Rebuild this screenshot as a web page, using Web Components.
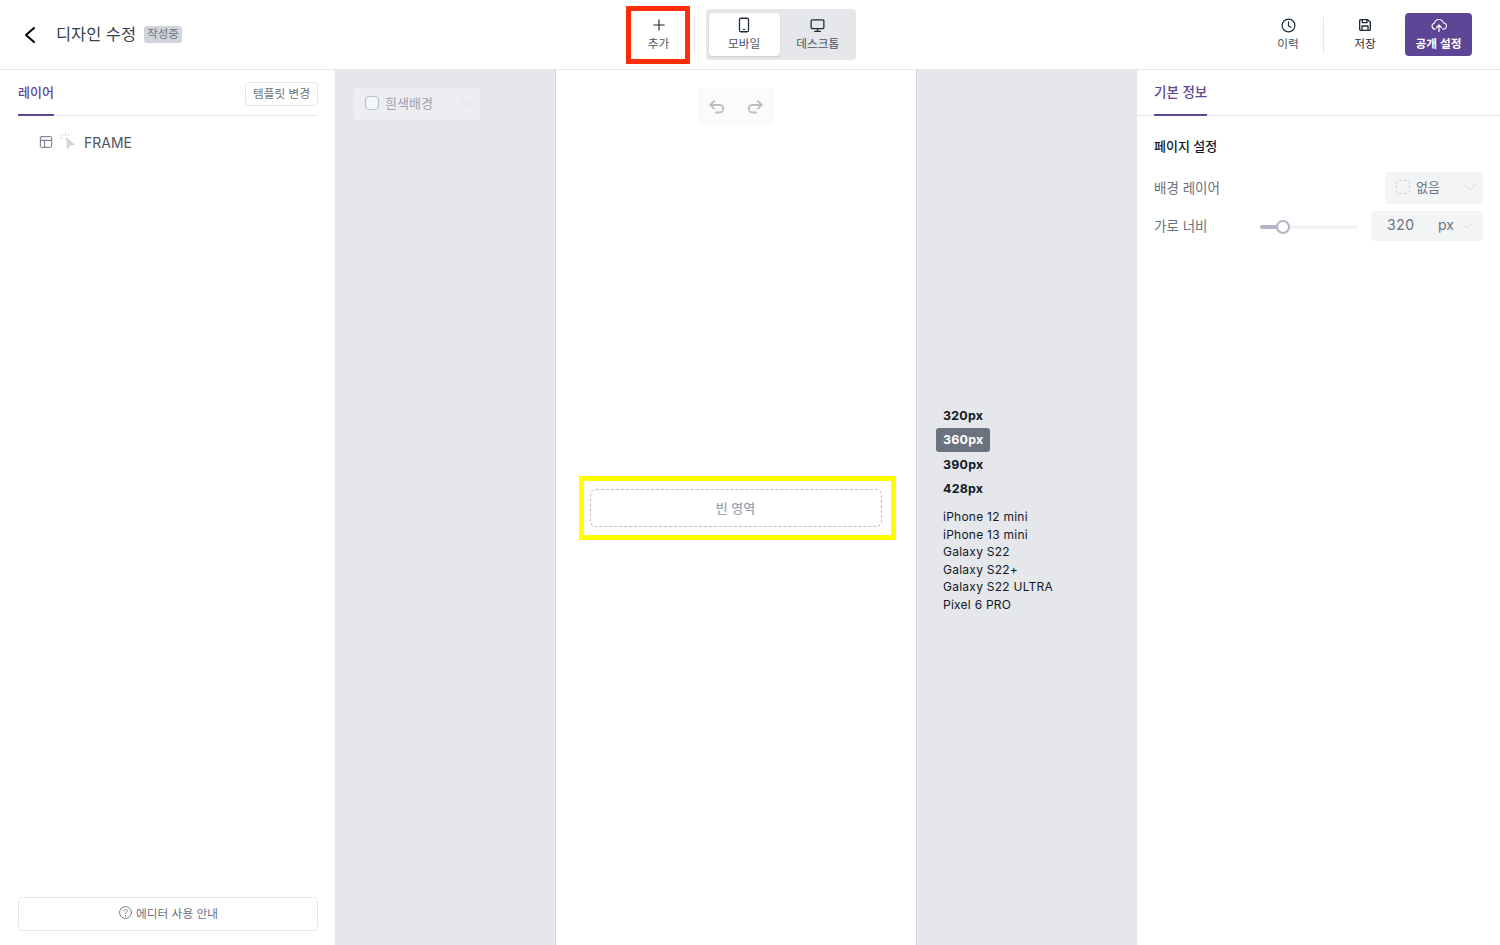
<!DOCTYPE html>
<html lang="ko">
<head>
<meta charset="utf-8">
<title>디자인 수정</title>
<style>
    html, body { margin: 0; height: 100%; }
    body {
        width: 1500px;
        height: 945px;
        overflow: hidden;
        font-family: Inter, "Noto Sans CJK KR", sans-serif;
        color: #374151;
        background: #fff;
    }
</style>
</head>
<body>
<design-editor></design-editor>

<script>
const PURPLE = '#5f4596';

const ICONS = {
    back: '<path d="M16 5l-8 7 8 7" stroke-width="2"/>',
    plus: '<path d="M12 5v14M5 12h14" stroke-width="1.5"/>',
    mobile: '<rect x="6" y="3" width="12" height="18" rx="2" stroke-width="1.7"/><path d="M11 18h2" stroke-width="1.4"/>',
    desktop: '<rect x="3" y="4" width="18" height="12.5" rx="1.6" stroke-width="1.8"/><path d="M12 16.5V20M8 20.2h8" stroke-width="1.8"/>',
    clock: '<circle cx="12" cy="12" r="9" stroke-width="1.7"/><path d="M12 7v5.4l3.4 2" stroke-width="1.7"/>',
    save: '<path d="M4 5.5A1.5 1.5 0 0 1 5.5 4H16l4 4v10.5a1.5 1.5 0 0 1-1.5 1.5h-13A1.5 1.5 0 0 1 4 18.5z" stroke-width="2"/><path d="M8 4v4.5h7V4M7.5 20v-6.5h9V20" stroke-width="2"/>',
    upload: '<path d="M7 17.5H6.500a4 4 0 0 1-.6-7.900A6.200 6.200 0 0 1 18 9.300a4.100 4.100 0 0 1-.4 8.200H17" stroke-width="1.500"/><path d="M12 20.500v-8M8.800 15.300L12 12l3.200 3.300" stroke-width="1.700"/>',
    undo: '<path d="M8.500 5L4 9.500 8.500 14" stroke-width="2.400"/><path d="M4.500 9.500H15a4.500 4.500 0 0 1 0 9h-4" stroke-width="2.400"/>',
    redo: '<path d="M15.500 5L20 9.500 15.500 14" stroke-width="2.400"/><path d="M19.500 9.500H9a4.500 4.500 0 0 0 0 9h4" stroke-width="2.400"/>',
    chevron: '<path d="M4 8.500l8 8 8-8" stroke-width="1.200"/>',
    layout: '<rect x="3.500" y="4" width="17" height="16" rx="1.500" stroke-width="1.500"/><path d="M3.500 9.500h17M10 9.500V20" stroke-width="1.500"/>',
    help: '<circle cx="12" cy="12" r="9.500" stroke-width="1.500"/><path d="M9.400 9.600a2.700 2.700 0 1 1 4.300 2.200c-1 .7-1.700 1.200-1.700 2.400" stroke-width="1.500"/><path d="M12 17v.4" stroke-width="1.800"/>'
};

// icono en linea, el tamano y color salen de los atributos
class UiIcon extends HTMLElement {
    connectedCallback() {
        const size = this.getAttribute('size') || 16;
        const name = this.getAttribute('name');
        this.attachShadow({mode: 'open'}).innerHTML = /* html */ `
            <style>
                :host { display: inline-flex; flex: none; width: ${size}px; height: ${size}px; color: ${this.getAttribute('color') || 'currentColor'}; }
                svg { width: 100%; height: 100%; display: block; fill: none; stroke: currentColor; stroke-linecap: round; stroke-linejoin: round; }
            </style>
            <svg viewBox="0 0 24 24">${ICONS[name] || ''}</svg>
        `;
    }
}

class ToolButton extends HTMLElement {
    connectedCallback() {
        const icon = this.getAttribute('icon');
        const size = this.getAttribute('size') || 17;
        this.attachShadow({mode: 'open'}).innerHTML = /* html */ `
            <style>
                :host { display: flex; flex-direction: column; align-items: center; justify-content: center; gap: 3px; box-sizing: border-box; font-size: 11.7px; line-height: 16px; color: var(--tool-color, #4b5563); }
                .i { height: 16px; display: flex; align-items: center; color: var(--tool-icon, #1f2937); }
            </style>
            <div class="i"><ui-icon name="${icon}" size="${size}"></ui-icon></div>
            <div><slot></slot></div>
        `;
    }
}

class AppHeader extends HTMLElement {
    constructor() {
        super();
        this.attachShadow({mode: 'open'}).innerHTML = /* html */ `
            <style>
                :host { display: flex; align-items: center; box-sizing: border-box; height: 70px; border-bottom: 1px solid #e5e7eb; background: #fff; flex: none; }
                .left { width: 626px; display: flex; align-items: center; padding-left: 18px; box-sizing: border-box; color: #000; }
                h1 { margin: 0 0 0 14px; padding-bottom: 2px; font-size: 16.4px; font-weight: 400; color: #374151; line-height: 24px; }
                .badge { margin-left: 8px; width: 38px; height: 17px; border-radius: 3px; background: #d1d5db; color: #6b7280; font-size: 11.5px; line-height: 17px; text-align: center; }
                .add { width: 64px; height: 58px; border: 5px solid #ff2d06; padding-left: 1px; background: #fff; }
                .divider { width: 1px; background: #e5e7eb; height: 36px; flex: none; }
                .seg { margin-left: 11px; width: 150px; height: 51px; box-sizing: border-box; padding: 4px 3px; display: flex; gap: 3px; background: #e5e7eb; border-radius: 4px; }
                .seg tool-button { flex: 1; border-radius: 4px; }
                .seg .on { background: #fff; box-shadow: 0 1px 2px rgba(0,0,0,.12); }
                .right { margin-left: auto; display: flex; align-items: center; padding-right: 28px; }
                .hist { width: 70px; }
                .save { width: 82px; --tool-color: #1f2937; }
                .pub { width: 67px; height: 43px; border-radius: 4px; background: ${PURPLE}; --tool-color: #fff; --tool-icon: #fff; font-weight: 600; }
            </style>
            <div class="left">
                <ui-icon name="back" size="24"></ui-icon>
                <h1>디자인 수정</h1>
                <div class="badge">작성중</div>
            </div>
            <tool-button class="add" icon="plus" size="18">추가</tool-button>
            <div class="divider" style="margin-left:4px"></div>
            <div class="seg">
                <tool-button class="on" icon="mobile" size="18">모바일</tool-button>
                <tool-button icon="desktop">데스크톱</tool-button>
            </div>
            <div class="right">
                <tool-button class="hist" icon="clock">이력</tool-button>
                <div class="divider"></div>
                <tool-button class="save" icon="save" size="16">저장</tool-button>
                <tool-button class="pub" icon="upload" size="18" style="margin-left:-1px">공개 설정</tool-button>
            </div>
        `;
    }
}

class LayerPanel extends HTMLElement {
    constructor() {
        super();
        this.attachShadow({mode: 'open'}).innerHTML = /* html */ `
            <style>
                :host { display: flex; flex-direction: column; width: 335px; flex: none; box-sizing: border-box; padding: 0 17px 14px 18px; background: #fff; }
                .tabs { display: flex; justify-content: space-between; align-items: flex-start; height: 45px; border-bottom: 1px solid #e5e7eb; }
                .tab { height: 44px; line-height: 44px; border-bottom: 2px solid ${PURPLE}; color: ${PURPLE}; font-size: 13px; font-weight: 500; }
                .change { margin-top: 12px; width: 73px; height: 24px; box-sizing: border-box; border: 1px solid #e5e7eb; border-radius: 4px; font-size: 11.7px; line-height: 23px; text-align: center; color: #6b7280; }
                .row { display: flex; align-items: center; height: 20px; margin-top: 16px; padding-left: 20px; color: #4b5563; font-size: 14px; }
                .cursor { width: 16px; height: 18px; margin: 0 8px 0 6px; flex: none; }
                .help { margin-top: auto; height: 34px; box-sizing: border-box; padding-bottom: 3px; border: 1px solid #e5e7eb; border-radius: 4px; display: flex; align-items: center; justify-content: center; gap: 3px; font-size: 11.7px; color: #6b7280; }
            </style>
            <div class="tabs">
                <div class="tab">레이어</div>
                <div class="change">템플릿 변경</div>
            </div>
            <div class="row">
                <ui-icon name="layout" size="16" color="#6b7280"></ui-icon>
                <svg class="cursor" viewBox="0 0 16 18">
                    <path d="M6 4l9.500 8-4.800.3L7 17z" fill="#d1d5db"/>
                    <path d="M5.500 0v2.500M1.500 1l2 2M9.500 1L7.800 3M0 5h2.500" stroke="#d1d5db" fill="none"/>
                </svg>
                <span>FRAME</span>
            </div>
            <div class="help"><ui-icon name="help" size="15" color="#6b7280"></ui-icon>에디터 사용 안내</div>
        `;
    }
}

class SizeList extends HTMLElement {
    constructor() {
        super();
        const sizes = ['320px', '360px', '390px', '428px'];
        const devices = ['iPhone 12 mini', 'iPhone 13 mini', 'Galaxy S22', 'Galaxy S22+', 'Galaxy S22 ULTRA', 'Pixel 6 PRO'];
        this.attachShadow({mode: 'open'}).innerHTML = /* html */ `
            <style>
                :host { display: block; padding-left: 19px; color: #111827; font-size: 12px; letter-spacing: .25px; }
                .size { width: 54px; height: 24px; line-height: 24px; box-sizing: border-box; padding-left: 7px; margin-bottom: .4px; border-radius: 3px; font-size: 12.4px; font-weight: 700; color: #111827; }
                .size.on { background: #6b7280; color: #fff; }
                .dev { padding-left: 7px; line-height: 17.55px; }
                .devs { margin-top: 7px; }
            </style>
            ${sizes.map(s => `<div class="size ${s === '360px' ? 'on' : ''}">${s}</div>`).join('')}
            <div class="devs">${devices.map(d => `<div class="dev">${d}</div>`).join('')}</div>
        `;
    }
}

class CanvasArea extends HTMLElement {
    constructor() {
        super();
        this.attachShadow({mode: 'open'}).innerHTML = /* html */ `
            <style>
                :host { display: flex; flex: 1; min-width: 0; background: #e5e7eb; }
                .side { width: 220px; box-sizing: border-box; padding: 18px 19px; flex: none; }
                .bg-select { width: 126px; height: 32px; box-sizing: border-box; padding: 0 4px 3px 11px; display: flex; align-items: center; border-radius: 4px; background: #eceef2; color: #9ca3af; font-size: 13px; }
                .check { width: 12px; height: 12px; border: 1px solid #b4bccb; border-radius: 4px; background: #f5f6f9; margin-right: 6px; flex: none; }
                .bg-select ui-icon { margin-left: auto; }
                .page { width: 362px; flex: none; box-sizing: border-box; border-left: 1px solid #d1d5db; border-right: 1px solid #d1d5db; background: #fff; display: flex; flex-direction: column; align-items: center; }
                .history { margin-top: 18px; width: 76px; height: 38px; display: flex; align-items: center; justify-content: center; gap: 18px; background: #fbfbfb; border-radius: 2px; }
                .mark { margin-top: 350px; margin-left: 2px; width: 317px; height: 64px; box-sizing: border-box; border: 5px solid #ffff00; padding: 8px 9px 8px 6px; }
                .empty { height: 38px; box-sizing: border-box; padding-bottom: 2px; border: 1px dashed #b9bdc6; border-radius: 6px; display: flex; align-items: center; justify-content: center; font-size: 13px; font-weight: 500; color: #9ca3af; }
                .sizes { flex: 1; padding-top: 334px; }
            </style>
            <div class="side">
                <div class="bg-select">
                    <span class="check"></span>흰색배경
                    <ui-icon name="chevron" size="18" color="#d9dce2"></ui-icon>
                </div>
            </div>
            <div class="page">
                <div class="history">
                    <ui-icon name="undo" size="20" color="#bfbfbf"></ui-icon>
                    <ui-icon name="redo" size="20" color="#bfbfbf"></ui-icon>
                </div>
                <div class="mark"><div class="empty">빈 영역</div></div>
            </div>
            <size-list class="sizes"></size-list>
        `;
    }
}

class PropsPanel extends HTMLElement {
    constructor() {
        super();
        this.attachShadow({mode: 'open'}).innerHTML = /* html */ `
            <style>
                :host { display: block; width: 364px; flex: none; box-sizing: border-box; border-left: 1px solid #e5e7eb; background: #fff; font-size: 13.5px; color: #6b7280; }
                .tabs { height: 45px; box-sizing: content-box; padding-left: 17px; border-bottom: 1px solid #e5e7eb; }
                .tab { display: inline-block; height: 44px; line-height: 44px; border-bottom: 2px solid ${PURPLE}; color: ${PURPLE}; font-weight: 500; font-size: 13.5px; }
                .body { padding: 0 17px; }
                h2 { margin: 20px 0 16px; font-size: 13px; line-height: 20px; font-weight: 500; color: #111827; }
                .row { display: flex; align-items: center; }
                .row + .row { margin-top: 7px; }
                .label { width: 106px; flex: none; padding-bottom: 3px; }
                .select { margin-left: auto; height: 32px; box-sizing: border-box; background: #f3f4f6; border-radius: 4px; display: flex; align-items: center; padding-bottom: 3px; }
                .none { width: 98px; padding-left: 11px; padding-right: 5px; font-size: 13px; }
                .dash { width: 12px; height: 12px; border: 1px dashed #d1d5db; border-radius: 3px; margin-right: 6px; }
                .select ui-icon { margin-left: auto; }
                .width { width: 112px; height: 30px; padding-left: 16px; padding-right: 8px; font-size: 14px; }
                .num { width: 51px; letter-spacing: .5px; }
                .slider { position: relative; width: 98px; height: 4px; margin-top: 2px; border-radius: 2px; background: #f3f4f6; }
                .slider i { display: block; width: 23px; height: 4px; border-radius: 2px; background: #b9b2c6; }
                .slider b { position: absolute; left: 16px; top: -5px; width: 10px; height: 10px; background: #fff; border: 2px solid #b9b2c6; border-radius: 50%; }
            </style>
            <div class="tabs"><span class="tab">기본 정보</span></div>
            <div class="body">
                <h2>페이지 설정</h2>
                <div class="row">
                    <div class="label">배경 레이어</div>
                    <div class="select none"><span class="dash"></span>없음<ui-icon name="chevron" size="16" color="#d1d5db"></ui-icon></div>
                </div>
                <div class="row">
                    <div class="label">가로 너비</div>
                    <div class="slider"><i></i><b></b></div>
                    <div class="select width"><span class="num">320</span><span>px</span><ui-icon name="chevron" size="16" color="#d1d5db"></ui-icon></div>
                </div>
            </div>
        `;
    }
}

class DesignEditor extends HTMLElement {
    constructor() {
        super();
        this.attachShadow({mode: 'open'}).innerHTML = /* html */ `
            <style>
                :host { display: flex; flex-direction: column; height: 945px; }
                main { flex: 1; display: flex; min-height: 0; }
            </style>
            <app-header></app-header>
            <main>
                <layer-panel></layer-panel>
                <canvas-area></canvas-area>
                <props-panel></props-panel>
            </main>
        `;
    }
}

customElements.define('ui-icon', UiIcon);
customElements.define('tool-button', ToolButton);
customElements.define('app-header', AppHeader);
customElements.define('layer-panel', LayerPanel);
customElements.define('size-list', SizeList);
customElements.define('canvas-area', CanvasArea);
customElements.define('props-panel', PropsPanel);
customElements.define('design-editor', DesignEditor);
</script>
</body>
</html>
